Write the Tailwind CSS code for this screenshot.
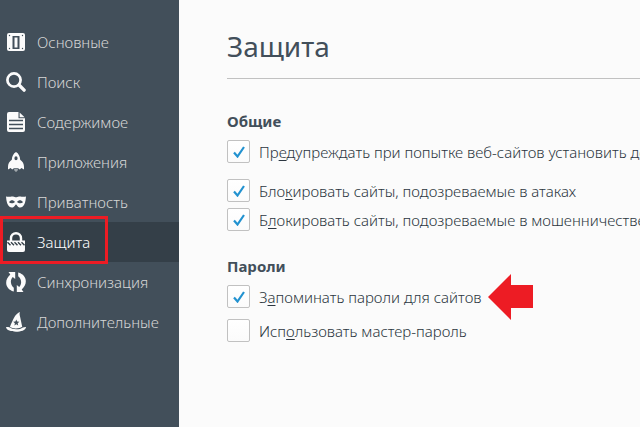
<!DOCTYPE html>
<html lang="ru">
<head>
    <meta charset="UTF-8">
    <meta name="viewport" content="width=device-width, initial-scale=1.0">
    <title>Защита</title>
    <script src="https://cdn.jsdelivr.net/npm/@tailwindcss/browser@4"></script>
</head>
<body class="bg-[#fbfbfb] font-['Noto_Sans','Open_Sans',sans-serif] text-[15px] leading-5 font-light text-[#2b3640]">

    <div class="flex h-screen overflow-hidden">

        <!-- Categories -->
        <nav class="relative w-[179px] shrink-0 bg-[#424f5a] pt-[22px] text-[#d6d6d6]">
            <a href="#general" class="flex h-10 items-center gap-[11px] pl-1.5 hover:bg-[#5e6972]">
                <svg class="size-5 shrink-0" viewBox="0 0 20 20" fill="#fbfbfb">
                    <rect x="1" y="1" width="18" height="18" rx="2" />
                    <path fill="#424f5a" fill-rule="evenodd" d="M6.5 4h7v13h-7zM8.5 5.500v10h3v-10z" />
                    <g fill="#424f5a">
                        <circle cx="3.5" cy="3.5" r="0.7" />
                        <circle cx="16.5" cy="3.5" r="0.7" />
                        <circle cx="3.5" cy="16.5" r="0.7" />
                        <circle cx="16.5" cy="16.5" r="0.7" />
                    </g>
                </svg>
                <span>Основные</span>
            </a>
            <a href="#search" class="flex h-10 items-center gap-[11px] pl-1.5 hover:bg-[#5e6972]">
                <svg class="size-5 shrink-0" viewBox="0 0 20 20" fill="none" stroke="#fbfbfb">
                    <circle cx="8" cy="8" r="6.6" stroke-width="2.7" />
                    <path stroke-width="3.4" stroke-linecap="round" d="M13.3 13.3l4.8 4.8" />
                </svg>
                <span>Поиск</span>
            </a>
            <a href="#content" class="flex h-10 items-center gap-[11px] pl-1.5 hover:bg-[#5e6972]">
                <svg class="size-5 shrink-0" viewBox="0 0 20 20" fill="#fbfbfb">
                    <path d="M3 0h9.5v6.3H19V18a2 2 0 0 1-2 2H3a2 2 0 0 1-2-2V2a2 2 0 0 1 2-2z" />
                    <path d="M13.6 0.6L18.6 5.2h-5z" />
                    <path stroke="#424f5a" stroke-width="1.3" d="M3 8.500h14M3 12.500h14M3 16.500h14" />
                </svg>
                <span>Содержимое</span>
            </a>
            <a href="#applications" class="flex h-10 items-center gap-[11px] pl-1.5 hover:bg-[#5e6972]">
                <svg class="size-5 shrink-0" viewBox="0 0 20 20" fill="#fbfbfb">
                    <path fill-rule="evenodd" d="M10 0c2.600 1.500 4 4.400 4.200 7.700 2.500 1.800 3.800 4.100 3.800 7.100v2.700l-2.600-1.600-1.600 1.600-1.700-1.300H7.900l-1.700 1.300-1.600-1.600L2 17.500v-2.700c0-3 1.300-5.300 3.800-7.100C6 4.400 7.400 1.500 10 0zM10 4.200a1.600 2 0 1 0 0 4a1.600 2 0 1 0 0-4z" />
                    <path fill="#a0a7ac" d="M8 17h4l-.5 1.700L10 20l-1.500-1.300z" />
                </svg>
                <span>Приложения</span>
            </a>
            <a href="#privacy" class="flex h-10 items-center gap-[11px] pl-1.5 hover:bg-[#5e6972]">
                <svg class="size-5 shrink-0" viewBox="0 0 20 20" fill="#fbfbfb">
                    <path fill-rule="evenodd" d="M0 4.600c3.500.6 4.500-.3 7-.2 1.300 0 2.200.9 3 .9s1.700-.9 3-.9c2.500-.1 3.500.8 7 .2-.4 5-1.200 8.600-3.800 10.400-2.200 1-4.200.2-5.200-1.600-.4-.7-.6-.9-1-.9s-.6.2-1 .9c-1 1.800-3 2.600-5.200 1.600C1.200 13.200.4 9.600 0 4.600zM3 10.300c1.500 1.300 4.300 1.400 6-.4C7.300 7.800 4.800 7.500 3 10.300zM17 10.300c-1.500 1.300-4.300 1.400-6-.4 1.700-2.100 4.200-2.400 6 .4z" />
                </svg>
                <span>Приватность</span>
            </a>
            <a href="#security" aria-current="page" class="flex h-10 items-center gap-[11px] bg-[#343f48] pl-1.5 text-white">
                <svg class="size-5 shrink-0" viewBox="0 0 20 20" fill="#fbfbfb">
                    <path fill="none" stroke="#fbfbfb" stroke-width="2.4" d="M5 9V6.200a5 5 0 0 1 10 0V9" />
                    <path d="M1 8.500h18V18a2 2 0 0 1-2 2H3a2 2 0 0 1-2-2z" />
                    <path stroke="#343f48" stroke-width="1.4" d="M1.500 10.300l3 3M5 10.300l3 3M8.500 10.300l3 3M12 10.300l3 3M15.500 10.300l3 3" />
                </svg>
                <span>Защита</span>
            </a>
            <a href="#sync" class="flex h-10 items-center gap-[11px] pl-1.5 hover:bg-[#5e6972]">
                <svg class="size-5 shrink-0" viewBox="0 0 20 20" fill="#fbfbfb">
                    <path d="M2.500 0H9.200v7L6.800 5C4 8 4.200 12.800 7.800 15.800V19.600C-1 17.300-2.200 8.300 4.300 2.600z" />
                    <path d="M17.500 20H10.800v-7l2.400 2c2.800-3 2.600-7.800-1-10.800V.4c8.800 2.300 10 11.300 3.500 17z" />
                </svg>
                <span>Синхронизация</span>
            </a>
            <a href="#advanced" class="flex h-10 items-center gap-[11px] pl-1.5 hover:bg-[#5e6972]">
                <svg class="size-5 shrink-0" viewBox="0 0 20 20" fill="#fbfbfb">
                    <path d="M14 0c-.8 1.700-.3 3.300.2 5.200l2 9.500c-3 2.200-9.300 2.200-12.300.3C5.200 11.500 7 7.500 8.600 4.700 9.800 2.600 11.800 1 14 0z" />
                    <path fill="#424f5a" d="M10.300 7.600l.9 2 2.200.2-1.700 1.400.5 2.200-1.900-1.200-1.900 1.200.5-2.200-1.700-1.400 2.200-.2z" />
                    <path d="M3.300 15.300c3.200 2.600 10.400 2.600 13.600.1 1.400-.2 2.700-.6 3.100-.2-.5 3-5 4.500-10 4.500S.5 18.300 0 15.300c.8-.4 2 0 3.300 0z" />
                </svg>
                <span>Дополнительные</span>
            </a>

            <!-- Frame round the current category -->
            <div class="pointer-events-none absolute top-[216px] left-0 h-12 w-[108px] border-3 border-[#ed1c24]"></div>
        </nav>

        <!-- Pane -->
        <main class="min-w-0 flex-1 overflow-hidden pt-6 pl-12 whitespace-nowrap">
            <h1 class="border-b border-[#c1c1c1] pb-[10px] text-[28px] leading-11 font-normal text-[#424f5a]">Защита</h1>

            <section class="mt-[30px]">
                <h2 class="leading-6 font-bold text-[#424f5a]">Общие</h2>
                <div class="mt-[7px] flex flex-col items-start">
                    <label class="flex items-center gap-[9px]">
                        <span class="grid place-items-center">
                            <input type="checkbox" checked class="peer col-start-1 row-start-1 size-[23px] appearance-none rounded-xs border border-[#c1c1c1] bg-linear-to-b from-white to-[#fbfbfb]">
                            <svg class="pointer-events-none invisible col-start-1 row-start-1 size-3 peer-checked:visible" viewBox="0 0 12 12" fill="none" stroke="#2292d0" stroke-width="2.2">
                                <path d="M1 6.500l3.500 4L11 1" />
                            </svg>
                        </span>
                        <span>Пр<u class="underline-offset-2">е</u>дупреждать при попытке веб-сайтов установить дополнения</span>
                    </label>
                    <label class="mt-4 flex items-center gap-[9px]">
                        <span class="grid place-items-center">
                            <input type="checkbox" checked class="peer col-start-1 row-start-1 size-[23px] appearance-none rounded-xs border border-[#c1c1c1] bg-linear-to-b from-white to-[#fbfbfb]">
                            <svg class="pointer-events-none invisible col-start-1 row-start-1 size-3 peer-checked:visible" viewBox="0 0 12 12" fill="none" stroke="#2292d0" stroke-width="2.2">
                                <path d="M1 6.500l3.500 4L11 1" />
                            </svg>
                        </span>
                        <span>Бло<u class="underline-offset-2">к</u>ировать сайты, подозреваемые в атаках</span>
                    </label>
                    <label class="mt-1.5 flex items-center gap-[9px]">
                        <span class="grid place-items-center">
                            <input type="checkbox" checked class="peer col-start-1 row-start-1 size-[23px] appearance-none rounded-xs border border-[#c1c1c1] bg-linear-to-b from-white to-[#fbfbfb]">
                            <svg class="pointer-events-none invisible col-start-1 row-start-1 size-3 peer-checked:visible" viewBox="0 0 12 12" fill="none" stroke="#2292d0" stroke-width="2.2">
                                <path d="M1 6.500l3.500 4L11 1" />
                            </svg>
                        </span>
                        <span>Б<u class="underline-offset-2">л</u>окировать сайты, подозреваемые в мошенничестве</span>
                    </label>
                </div>
            </section>

            <section class="mt-[23px]">
                <h2 class="leading-6 font-bold text-[#424f5a]">Пароли</h2>
                <div class="mt-[7px] flex flex-col items-start">
                    <div class="flex items-center gap-1.5">
                        <label class="flex items-center gap-[9px]">
                            <span class="grid place-items-center">
                                <input type="checkbox" checked class="peer col-start-1 row-start-1 size-[23px] appearance-none rounded-xs border border-[#c1c1c1] bg-linear-to-b from-white to-[#fbfbfb]">
                                <svg class="pointer-events-none invisible col-start-1 row-start-1 size-3 peer-checked:visible" viewBox="0 0 12 12" fill="none" stroke="#2292d0" stroke-width="2.2">
                                    <path d="M1 6.500l3.500 4L11 1" />
                                </svg>
                            </span>
                            <span>З<u class="underline-offset-2">а</u>поминать пароли для сайтов</span>
                        </label>
                        <svg class="-my-3 h-[46px] w-[45px]" viewBox="0 0 45 46" fill="#ed1c24">
                            <path d="M0 23L23 0v11h22v23H23v12z" />
                        </svg>
                    </div>
                    <label class="mt-[11px] flex items-center gap-[9px]">
                        <span class="grid place-items-center">
                            <input type="checkbox" class="peer col-start-1 row-start-1 size-[23px] appearance-none rounded-xs border border-[#c1c1c1] bg-linear-to-b from-white to-[#fbfbfb]">
                            <svg class="pointer-events-none invisible col-start-1 row-start-1 size-3 peer-checked:visible" viewBox="0 0 12 12" fill="none" stroke="#2292d0" stroke-width="2.2">
                                <path d="M1 6.500l3.500 4L11 1" />
                            </svg>
                        </span>
                        <span>Исп<u class="underline-offset-2">о</u>льзовать мастер-пароль</span>
                    </label>
                </div>
            </section>
        </main>

    </div>

</body>
</html>
